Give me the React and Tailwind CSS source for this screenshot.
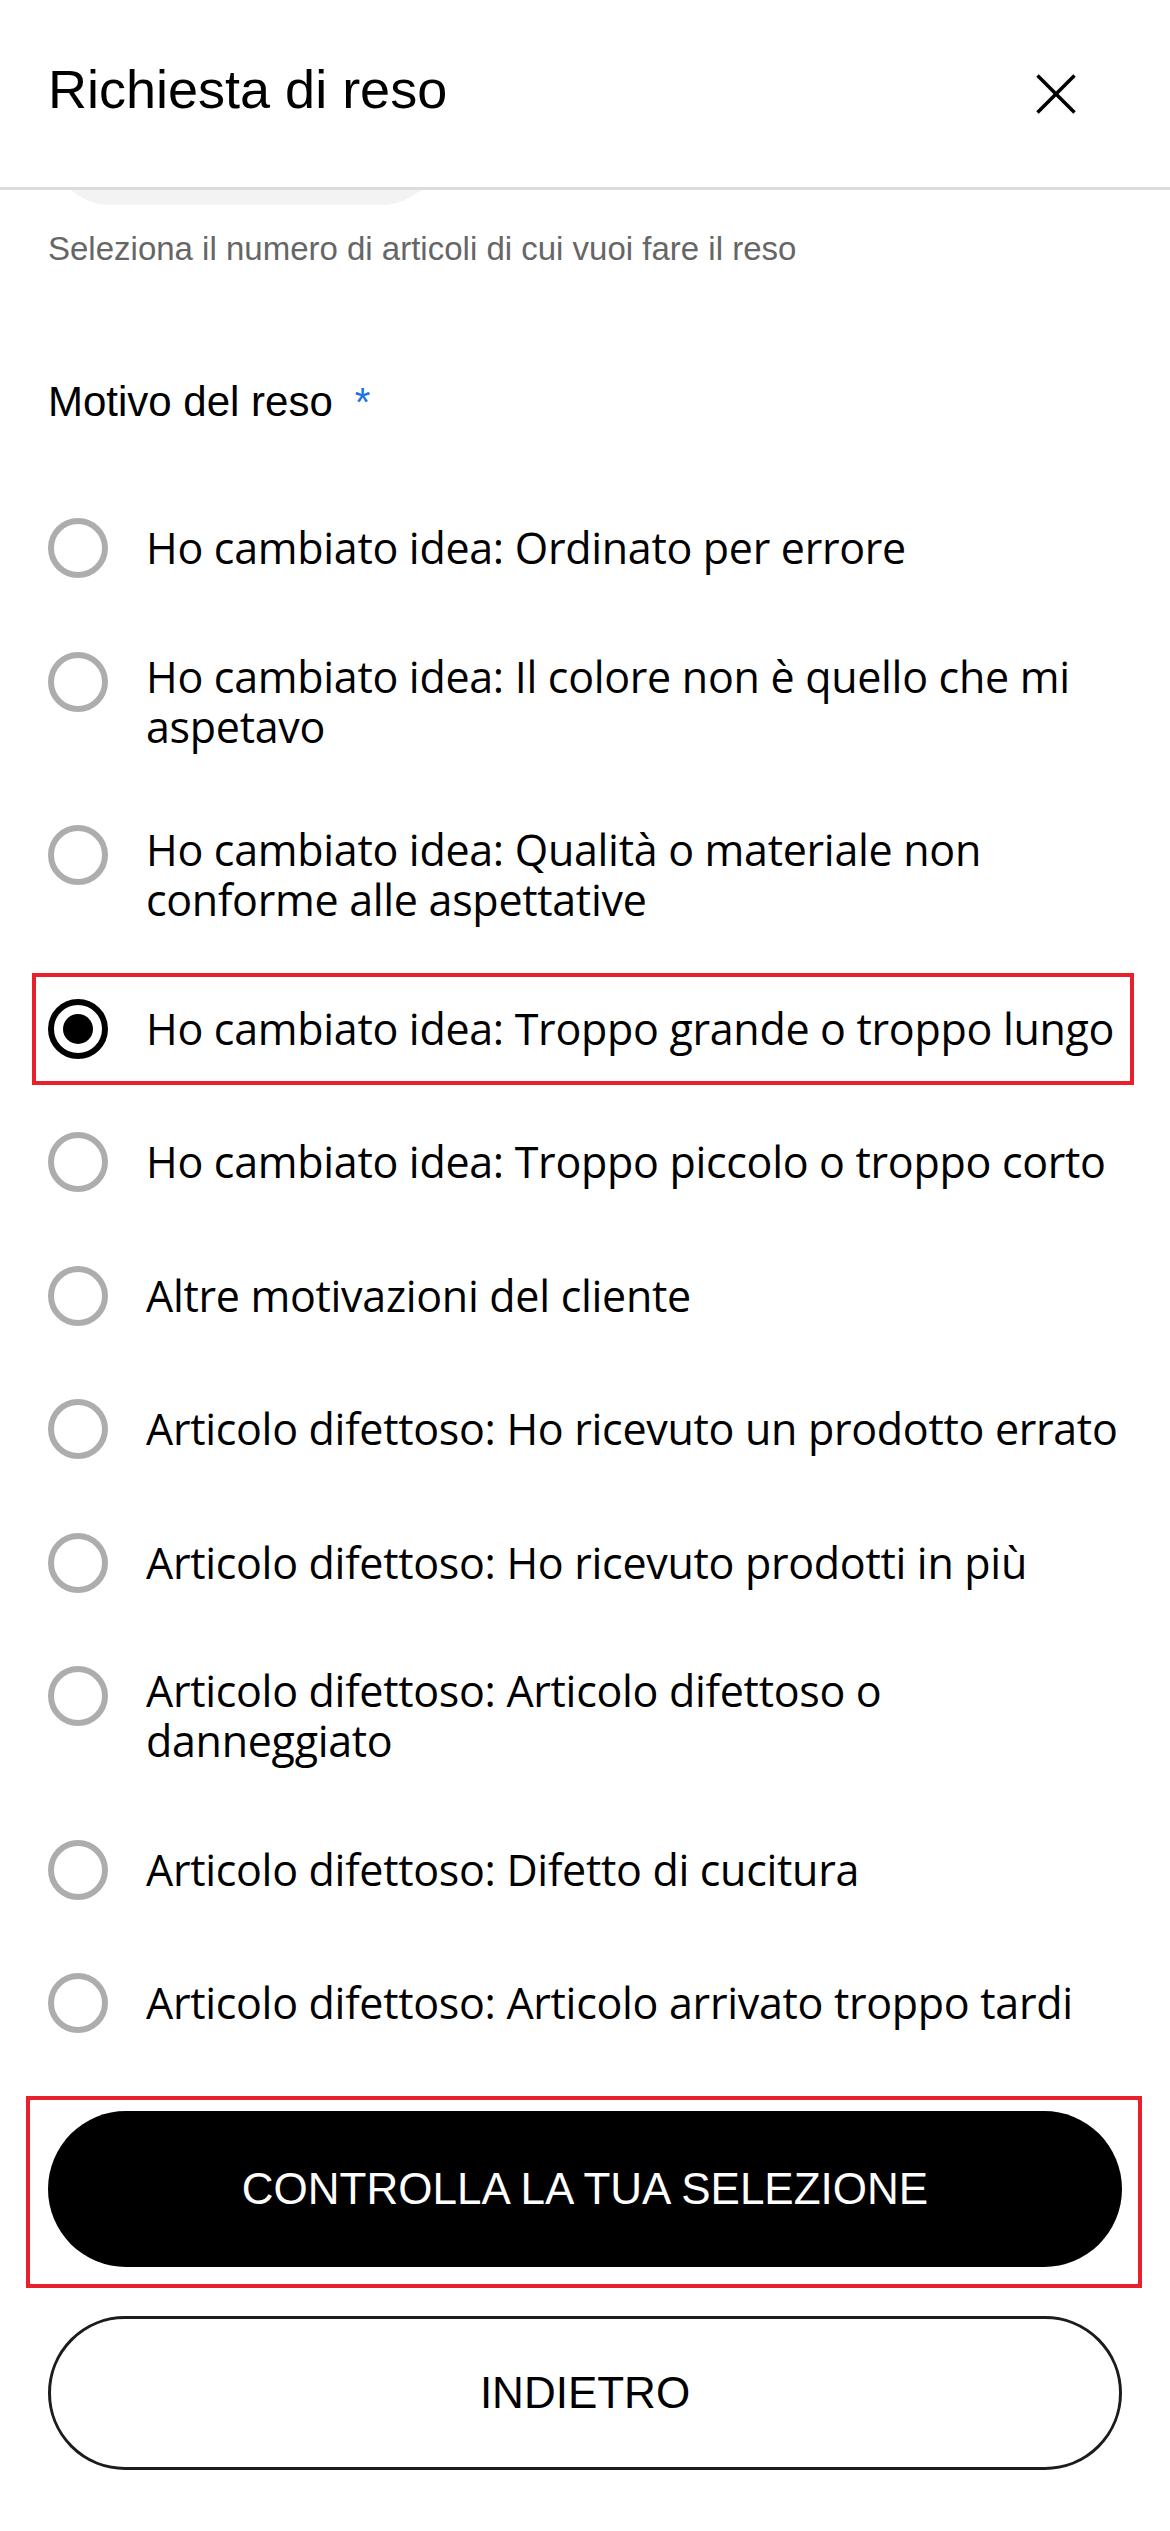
import { useState } from "react";

const reasons = [
    "Ho cambiato idea: Ordinato per errore",
    "Ho cambiato idea: Il colore non è quello che mi aspetavo",
    "Ho cambiato idea: Qualità o materiale non conforme alle aspettative",
    "Ho cambiato idea: Troppo grande o troppo lungo",
    "Ho cambiato idea: Troppo piccolo o troppo corto",
    "Altre motivazioni del cliente",
    "Articolo difettoso: Ho ricevuto un prodotto errato",
    "Articolo difettoso: Ho ricevuto prodotti in più",
    "Articolo difettoso: Articolo difettoso o danneggiato",
    "Articolo difettoso: Difetto di cucitura",
    "Articolo difettoso: Articolo arrivato troppo tardi",
];

const arial = { fontFamily: '"Liberation Sans", Arial, sans-serif' };

const Radio = ({ checked }) => {
    if (checked) {
        return (
            <span className="flex h-[60px] w-[60px] shrink-0 items-center justify-center rounded-full border-[6px] border-black">
                <span className="h-[30px] w-[30px] rounded-full bg-black" />
            </span>
        );
    }
    return <span className="h-[60px] w-[60px] shrink-0 rounded-full border-[6px] border-[#adadad]" />;
};

const ReasonRow = ({ label, checked, onClick }) => {
    return (
        <div className="flex cursor-pointer items-start gap-[38px]" onClick={onClick}>
            <Radio checked={checked} />
            <p className="flex min-h-[60px] min-w-0 flex-1 items-center text-[43px] leading-[50px] tracking-[-0.3px] text-black font-['Open_Sans',sans-serif]">
                {label}
            </p>
        </div>
    );
};

const App = () => {
    const [selected, setSelected] = useState(3);

    return (
        <div className="min-h-screen w-full bg-white pb-[60px]">
            <header className="flex h-[190px] items-center justify-between border-b-[3px] border-[#dcdcdc] pl-[48px] pr-[94px]">
                <h1 className="mb-[9px] text-[54px] leading-[62px] text-black" style={arial}>Richiesta di reso</h1>
                <button aria-label="Chiudi" className="h-[40px] w-[40px]">
                    <svg width="40" height="40" viewBox="0 0 40 40" fill="none" stroke="black" strokeWidth="3.6">
                        <line x1="1.5" y1="1.5" x2="38.5" y2="38.5" />
                        <line x1="38.5" y1="1.5" x2="1.5" y2="38.5" />
                    </svg>
                </button>
            </header>

            {/* bottom of the quantity picker, scrolled under the header */}
            <div className="h-[15px] overflow-hidden">
                <div className="ml-[48px] -mt-[113px] h-[128px] w-[396px] rounded-full bg-[#f3f3f3]" />
            </div>

            <div className="px-[48px]">
                <p className="mt-[24px] text-[33px] leading-[40px] text-[#666666]" style={arial}>
                    Seleziona il numero di articoli di cui vuoi fare il reso
                </p>

                <h2 className="mt-[108px] text-[42px] leading-[50px] text-black" style={arial}>
                    Motivo del reso
                    <span className="ml-[22px] text-[40px] text-[#1a73e8]">*</span>
                </h2>

                <div className="mt-[91px] flex flex-col gap-[73.5px]">
                    {reasons.map((label, i) =>
                        i === selected ? (
                            <div key={i} className="-my-[26px] -ml-[16px] -mr-[12px] border-4 border-[#e8202a] py-[22px] pl-[12px] pr-[8px]">
                                <ReasonRow label={label} checked onClick={() => setSelected(i)} />
                            </div>
                        ) : (
                            <ReasonRow key={i} label={label} checked={false} onClick={() => setSelected(i)} />
                        )
                    )}
                </div>

                <div className="mt-[63px] -ml-[22px] -mr-[20px] border-4 border-[#e8202a] pt-[11px] pb-[17px] pl-[18px] pr-[16px]">
                    <button className="flex h-[156px] w-full items-center justify-center rounded-full bg-black text-[44px] text-white" style={arial}>
                        CONTROLLA LA TUA SELEZIONE
                    </button>
                </div>

                <button className="mt-[28px] flex h-[154px] w-full items-center justify-center rounded-full border-[3px] border-[#1c1c1c] bg-white text-[44px] text-black" style={arial}>
                    INDIETRO
                </button>
            </div>
        </div>
    );
};

export default App;
